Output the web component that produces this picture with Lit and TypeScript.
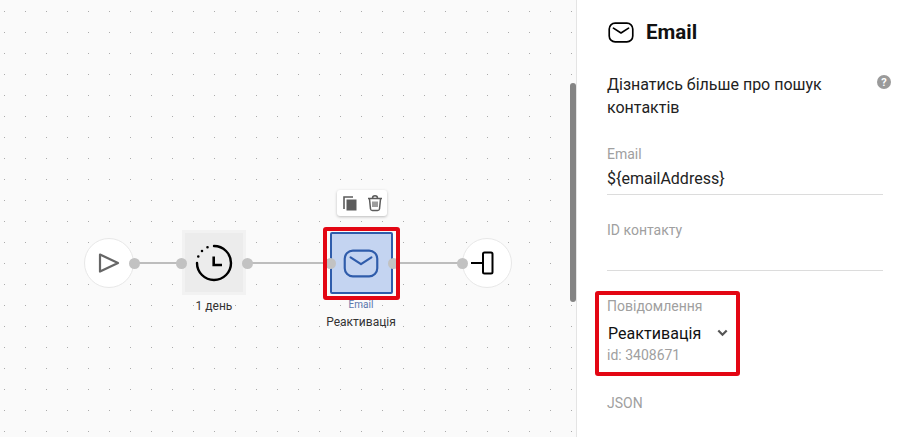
import { LitElement, html, css, svg } from "lit";
import { customElement } from "lit/decorators.js";

const mail = (color: string, w: number) => svg`
  <rect x="1.2" y="1.2" width="24" height="19" rx="6" fill="none" stroke="${color}" stroke-width="${w}"/>
  <path d="M5.5 6.2 L13.2 11.2 L20.9 6.2" fill="none" stroke="${color}" stroke-width="${w}" stroke-linecap="round" stroke-linejoin="round"/>`;

@customElement("app-root")
export class AppRoot extends LitElement {
  static styles = css`
    :host { display: block; width: 919px; height: 437px; overflow: hidden; font-family: Roboto, "Noto Sans", sans-serif; background: #fff; }
    * { box-sizing: border-box; }
    .page { display: flex; height: 437px; }
    .canvas {
      position: relative; width: 577px; flex: none; height: 437px; overflow: hidden;
      background-color: #fafafa;
      border-right: 1px solid #e4e4e4;
    }
    .dots { position: absolute; inset: 0;
      background-image: radial-gradient(circle at 0.5px 0.5px, #ababab 0.7px, transparent 0.72px);
      background-size: 21px 21px; background-position: 4px 11px; }
    .scroll { position: absolute; left: 570px; top: 83px; width: 6px; height: 219px; border-radius: 3px; background: #848484; }
    .wire { position: absolute; top: 262px; height: 2px; background: #bdbdbd; }
    .handle { position: absolute; width: 11px; height: 11px; border-radius: 50%; background: #c2c2c2; top: 257.5px; }
    .circle {
      position: absolute; top: 238px; width: 50px; height: 50px; border-radius: 50%;
      background: #fff; border: 1px solid #e8e8e8; display: flex; align-items: center; justify-content: center;
    }
    .delay {
      position: absolute; left: 182px; top: 230px; width: 64px; height: 65px;
      background: #ececec; border: 3px solid #f2f2f2; display: flex; align-items: center; justify-content: center;
    }
    .inner {
      position: absolute; left: 330px; top: 232px; width: 63px; height: 62px;
      background: #c4d4f1; border: 2px solid #2f5cab; border-radius: 2px;
      display: flex; align-items: center; justify-content: center;
    }
    .inner svg { margin-right: 2px; }
    .red {
      position: absolute; left: 323px; top: 227px; width: 77px; height: 73px;
      border: 4px solid #e30613; border-radius: 3px;
    }
    .toolbar {
      position: absolute; left: 337px; top: 190px; width: 50px; height: 26px; background: #fff; border-radius: 3px;
      box-shadow: 0 1px 3px rgba(0,0,0,.25); display: flex; align-items: center; gap: 10px; padding-left: 6px;
    }
    .cap { position: absolute; text-align: center; white-space: nowrap; transform: translateX(-50%); }
    .cap.day { left: 214px; top: 299px; font-size: 12px; line-height: 14px; color: #333; }
    .cap.type { left: 361px; top: 299px; font-size: 10px; line-height: 12px; color: #5b76ad; }
    .cap.name { left: 361px; top: 315px; font-size: 12px; line-height: 14px; color: #333; }

    .panel { flex: 1; padding: 21px 36px 0 30px; color: #111; min-width: 0; }
    .title { display: flex; align-items: center; gap: 12px; height: 22px; font-size: 20.5px; font-weight: 700; line-height: 22px; padding-left: 1px; }
    .intro { position: relative; margin-top: 30px; font-size: 16px; line-height: 23px; color: #222; width: 260px; }
    .help { position: absolute; left: 270px; top: 2px; }
    .label { font-size: 14px; line-height: 16px; color: #a0a0a0; }
    .field { border-bottom: 1px solid #dcdcdc; }
    .val { font-size: 16px; line-height: 24px; height: 24px; color: #222; }
    .f1 { margin-top: 27px; height: 49px; }
    .f1 .val { margin-top: 4px; padding-top: 1px; }
    .f2 { margin-top: 27px; height: 49px; }
    .msg {
      margin: 20px 0 0 -12px; width: 145px; height: 85px; padding: 3px 0 0 8px;
      border: 4px solid #e30613; border-radius: 3px;
    }
    .row { display: flex; align-items: center; height: 26px; margin-top: 6px; padding-left: 1px; font-size: 16px; color: #111; letter-spacing: .05px; }
    .row svg { margin-left: 16px; }
    .id { margin-top: 1px; font-size: 14px; line-height: 16px; color: #a0a0a0; }
    .json { margin-top: 19px; }
  `;

  render() {
    return html`<div class="page">
      <div class="canvas">
        <div class="dots"></div>
        <div class="wire" style="left:134px;width:47px"></div>
        <div class="wire" style="left:247px;width:84px"></div>
        <div class="wire" style="left:393px;width:69px"></div>
        <div class="circle" style="left:84px">
          <svg width="22" height="22" viewBox="0 0 22 22"><path d="M2 2.5 L20 11 L2 19.5 Z" fill="none" stroke="#666" stroke-width="2.2" stroke-linejoin="round"/></svg>
        </div>
        <div class="delay">
          <svg width="38" height="38" viewBox="0 0 38 38">
            <path d="M19 2 A17 17 0 1 1 2 19" fill="none" stroke="#000" stroke-width="2.4" stroke-linecap="round"/>
            <path d="M3.3 12.5 L3.3 12.5 M7 7 L7 7 M12.5 3.3 L12.5 3.3" fill="none" stroke="#000" stroke-width="2.6" stroke-linecap="round"/>
            <path d="M18.7 12.5 L18.7 21 L27 21" fill="none" stroke="#000" stroke-width="2.6"/>
          </svg>
        </div>
        <div class="inner">
          <svg width="36" height="29" viewBox="0 0 26.4 21.4">${mail("#2f5cab", 1.6)}</svg>
        </div>
        <div class="circle" style="left:462px">
          <svg style="margin-right:8px" width="24" height="24" viewBox="0 0 24 24">
            <path d="M0 12 H12" fill="none" stroke="#000" stroke-width="2"/>
            <rect x="12" y="1.5" width="9.5" height="21" rx="1.5" fill="none" stroke="#000" stroke-width="2"/>
          </svg>
        </div>
        <div class="handle" style="left:129px"></div>
        <div class="handle" style="left:176px"></div>
        <div class="handle" style="left:241.5px"></div>
        <div class="handle" style="left:325px"></div>
        <div class="handle" style="left:388px"></div>
        <div class="handle" style="left:456.5px"></div>
        <div class="red"></div>
        <div class="toolbar">
          <svg width="14" height="15" viewBox="0 0 14 15"><path d="M1 13 V1 H10" fill="none" stroke="#5c5c5c" stroke-width="1.6"/><rect x="3.5" y="3.5" width="10" height="11" fill="#5c5c5c"/></svg>
          <svg width="16" height="18" viewBox="0 0 16 18">
            <path d="M1 4.5 H15 M5.5 4 C5.5 1 10.5 1 10.5 4" fill="none" stroke="#5c5c5c" stroke-width="1.5"/>
            <path d="M2.5 5 L3.5 15 Q3.7 16.5 5.5 16.5 H10.5 Q12.3 16.5 12.5 15 L13.5 5" fill="none" stroke="#5c5c5c" stroke-width="1.5"/>
            <path d="M6 7.5 V13 M8 7.5 V13 M10 7.5 V13" stroke="#5c5c5c" stroke-width="1.2"/>
          </svg>
        </div>
        <div class="cap day">1 день</div>
        <div class="cap type">Email</div>
        <div class="cap name">Реактивація</div>
        <div class="scroll"></div>
      </div>
      <div class="panel">
        <div class="title"><svg width="26" height="21" viewBox="0 0 26.4 21.4">${mail("#000", 1.7)}</svg><span>Email</span></div>
        <div class="intro">Дізнатись більше про пошук контактів
          <svg class="help" width="14" height="14" viewBox="0 0 14 14"><circle cx="7" cy="7" r="7" fill="#9a9a9a"/><text x="7" y="11" text-anchor="middle" font-size="11" font-weight="700" fill="#fff" font-family="Roboto">?</text></svg>
        </div>
        <div class="field f1"><div class="label">Email</div><div class="val">\${emailAddress}</div></div>
        <div class="field f2"><div class="label">ID контакту</div></div>
        <div class="msg">
          <div class="label">Повідомлення</div>
          <div class="row">Реактивація<svg width="11" height="8" viewBox="0 0 11 8"><path d="M1.3 1.5 L5.5 5.7 L9.7 1.5" fill="none" stroke="#555" stroke-width="2.2"/></svg></div>
          <div class="id">id: 3408671</div>
        </div>
        <div class="label json">JSON</div>
      </div>
    </div>`;
  }
}
